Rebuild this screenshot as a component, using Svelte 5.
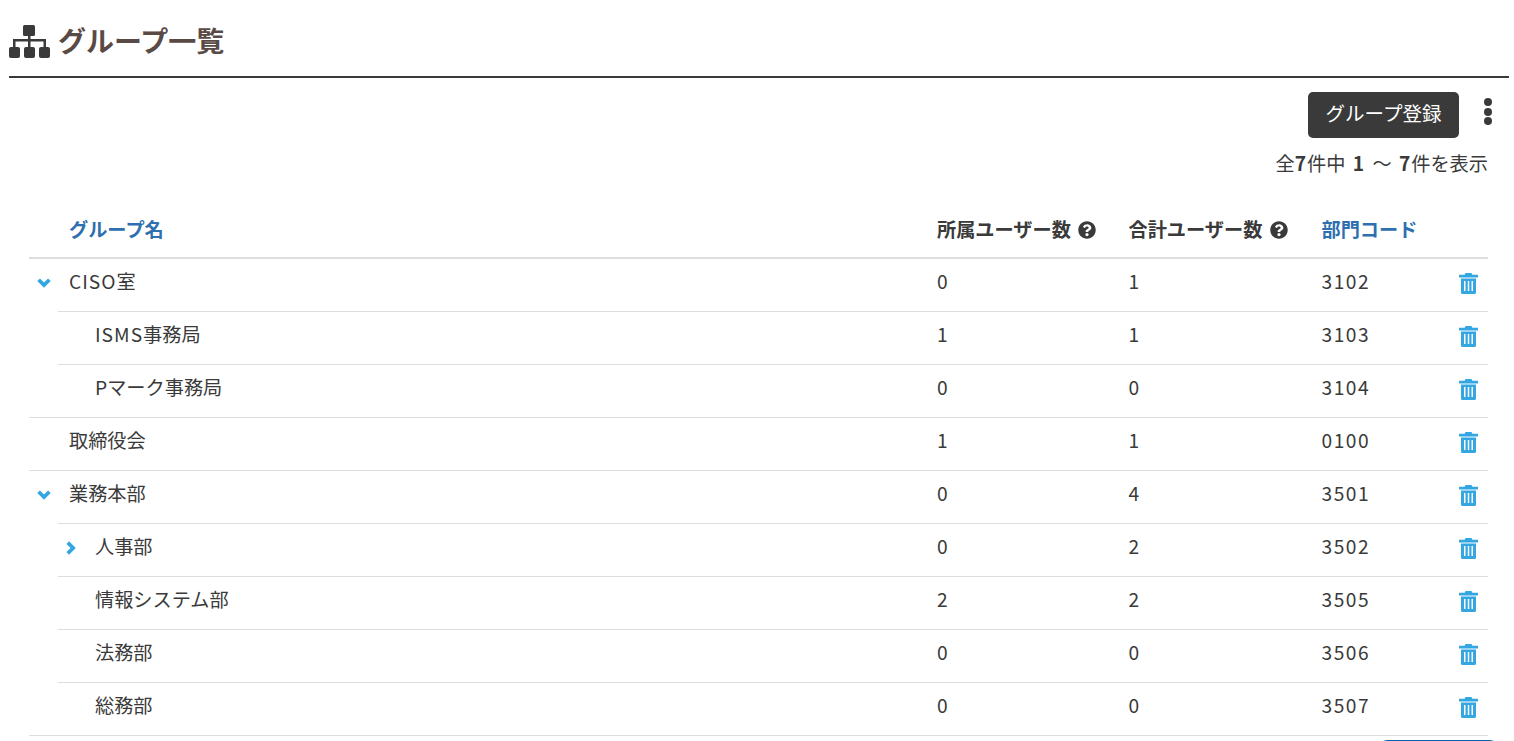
<script>
	const rows = [
		{ latin: 'CISO', name: '室', depth: 0, toggle: 'down', own: 0, total: 1, code: '3102' },
		{ latin: 'ISMS', name: '事務局', depth: 1, own: 1, total: 1, code: '3103' },
		{ name: 'Pマーク事務局', depth: 1, own: 0, total: 0, code: '3104' },
		{ name: '取締役会', depth: 0, own: 1, total: 1, code: '0100' },
		{ name: '業務本部', depth: 0, toggle: 'down', own: 0, total: 4, code: '3501' },
		{ name: '人事部', depth: 1, toggle: 'right', own: 0, total: 2, code: '3502' },
		{ name: '情報システム部', depth: 1, own: 2, total: 2, code: '3505' },
		{ name: '法務部', depth: 1, own: 0, total: 0, code: '3506' },
		{ name: '総務部', depth: 1, own: 0, total: 0, code: '3507' }
	];
</script>

{#snippet help()}
	<svg class="help" viewBox="0 0 512 512" aria-hidden="true">
		<path d="M504 256c0 137-111 248-248 248S8 393 8 256 119 8 256 8s248 111 248 248zM262.700 90c-54.500 0-89.300 23-116.600 63.800-3.500 5.300-2.400 12.400 2.700 16.300l34.700 26.300c5.200 3.900 12.600 3 16.700-2.100 17.900-22.700 30.100-35.800 57.300-35.800 20.400 0 45.700 13.100 45.700 33 0 15-12.400 22.700-32.600 34-23.600 13.200-54.800 29.700-54.800 70.900V300c0 6.600 5.400 12 12 12h56c6.600 0 12-5.400 12-12v-1.300c0-28.600 83.500-29.800 83.500-107.200C380 133.200 319.500 90 262.700 90zM256 339c-25.400 0-46 20.600-46 46s20.600 46 46 46 46-20.600 46-46-20.600-46-46-46z" />
	</svg>
{/snippet}

<div class="page">
	<header class="title">
		<svg class="org" viewBox="0 0 41 33" aria-hidden="true">
			<rect x="14" y="0" width="12" height="11" rx="1.500" />
			<rect x="0" y="22" width="11" height="11" rx="2" />
			<rect x="15" y="22" width="11" height="11" rx="2" />
			<rect x="30" y="22" width="11" height="11" rx="2" />
			<path d="M19 11h2.500v3H37v8h-2.500v-5.500H21.500V22H19v-5.500H6.500V22H4v-8h15z" />
		</svg>
		<h1>グループ一覧</h1>
	</header>

	<div class="content">
		<div class="actions">
			<button class="primary" type="button">グループ登録</button>
			<button class="more" type="button" aria-label="メニュー">
				<span></span><span></span><span></span>
			</button>
		</div>
		<p class="count">全<b>7</b>件中 <b>1</b> 〜 <b>7</b>件を表示</p>

		<table>
			<colgroup>
				<col class="c-name" />
				<col class="c-own" />
				<col class="c-total" />
				<col class="c-code" />
				<col class="c-del" />
			</colgroup>
			<thead>
				<tr>
					<th class="link name-head">グループ名</th>
					<th>所属ユーザー数 {@render help()}</th>
					<th>合計ユーザー数 {@render help()}</th>
					<th class="link">部門コード</th>
					<th></th>
				</tr>
			</thead>
			<tbody>
				{#each rows as row, i}
					<tr>
						<td class="name-cell" class:child={row.depth === 1} class:inset={rows[i + 1]?.depth === 1}>
							<div class="name">
								<span class="toggle">
									{#if row.toggle === 'down'}
										<svg viewBox="0 0 13 9" aria-hidden="true"><path d="M1.500 1.500 6.500 6.500l5-5" /></svg>
									{:else if row.toggle === 'right'}
										<svg class="right" viewBox="0 0 9 13" aria-hidden="true"><path d="M1.500 1.500 6.500 6.500l-5 5" /></svg>
									{/if}
								</span>
								<span>{#if row.latin}<span class="latin">{row.latin}</span>{/if}{row.name}</span>
							</div>
						</td>
						<td class="num">{row.own}</td>
						<td class="num">{row.total}</td>
						<td class="num">{row.code}</td>
						<td class="del">
							<svg viewBox="0 0 19 21" aria-label="削除">
								<path d="M6.500 0h6l.8 1.800h5.700V4.500H0V1.800h5.700z" />
								<path fill-rule="evenodd" d="M2 5.500h15V19.500a1.500 1.500 0 0 1-1.500 1.500h-12A1.500 1.500 0 0 1 2 19.500zM5 8v10h1.500V8zm3.750 0v10h1.500V8zm3.750 0v10H14V8z" />
							</svg>
						</td>
					</tr>
				{/each}
			</tbody>
		</table>
	</div>
	<div class="peek"></div>
</div>

<style>
	:global(body) {
		margin: 0;
		background: #fff;
		overflow: hidden;
	}

	.page {
		position: relative;
		height: 741px;
		overflow: hidden;
		padding: 0 5px 0 9px;
		color: #3a3a3a;
		font-family: "Noto Sans CJK JP", "Noto Sans", sans-serif;
		font-size: 19.2px;
	}

	.title {
		display: flex;
		align-items: center;
		gap: 8px;
		height: 76px;
		border-bottom: 2px solid #3a3a3a;
		color: #5a4a46;
	}

	.org {
		width: 41px;
		height: 33px;
		margin-top: 7px;
		fill: #3a3a3a;
	}

	h1 {
		margin: 4px 0 0;
		font-size: 28px;
		font-weight: 700;
		line-height: 1;
	}

	.content {
		padding: 0 21px 0 20px;
	}

	.actions {
		display: flex;
		justify-content: flex-end;
		align-items: flex-start;
		gap: 25px;
		margin-top: 14px;
	}

	.primary {
		width: 151px;
		height: 46px;
		padding: 0 0 6px;
		border: 0;
		border-radius: 5px;
		background: #3a3a3a;
		color: #fff;
		font: inherit;
		font-size: 19.5px;
	}

	.more {
		display: flex;
		flex-direction: column;
		gap: 1.500px;
		width: 13px;
		padding: 0;
		margin: 6px -9px 0 0;
		border: 0;
		background: none;
	}

	.more span {
		width: 8px;
		height: 8px;
		border-radius: 50%;
		background: #3a3a3a;
	}

	.count {
		margin: 9px 0 0;
		text-align: right;
		line-height: 32px;
		word-spacing: 3px;
	}

	.count b {
		font-weight: 700;
		letter-spacing: 1px;
	}

	table {
		width: 100%;
		margin-top: 22px;
		border-collapse: separate;
		border-spacing: 0;
		table-layout: fixed;
	}

	.c-name { width: 908px; }
	.c-own { width: 191.500px; }
	.c-total { width: 193px; }
	.c-code { width: 127px; }

	th {
		box-sizing: border-box;
		height: 58px;
		padding: 0;
		text-align: left;
		font-size: 19.2px;
		font-weight: 700;
		border-bottom: 2px solid #dedede;
		white-space: nowrap;
	}

	th.link {
		color: #2e6fb0;
	}

	.name-head {
		padding-left: 40px;
	}

	.help {
		width: 18px;
		height: 18px;
		margin-left: 3px;
		vertical-align: -2px;
		fill: #3a3a3a;
	}

	td {
		box-sizing: border-box;
		height: 53px;
		padding: 0 0 8px;
		border-bottom: 1px solid #dedede;
	}

	.name-cell {
		position: relative;
	}

	.name-cell.inset {
		border-bottom-color: transparent;
	}

	.name-cell.inset::after {
		content: "";
		position: absolute;
		left: 29px;
		right: 0;
		bottom: -1px;
		height: 1px;
		background: #dedede;
	}

	.name {
		display: flex;
		align-items: center;
		padding-left: 40px;
		position: relative;
	}

	.latin {
		letter-spacing: 1px;
	}

	.toggle {
		position: absolute;
		left: 8px;
		top: calc(50% + 2px);
		transform: translateY(-50%);
		display: flex;
	}

	.child .name {
		padding-left: 66px;
	}

	.child .toggle {
		left: 37px;
	}

	.toggle svg {
		width: 14px;
		height: 10px;
		fill: none;
		stroke: #34a7e2;
		stroke-width: 3.500;
	}

	.toggle svg.right {
		width: 10px;
		height: 14px;
	}

	.num {
		letter-spacing: 1.500px;
	}

	.del {
		text-align: right;
		padding: 0 10px 4px 0;
	}

	.del svg {
		display: block;
		width: 19px;
		height: 21px;
		margin-left: auto;
		fill: #34a7e2;
	}

	.peek {
		position: absolute;
		left: 1376px;
		top: 740px;
		width: 125px;
		height: 24px;
		border-radius: 12px;
		background: #0b5fa8;
	}
</style>
